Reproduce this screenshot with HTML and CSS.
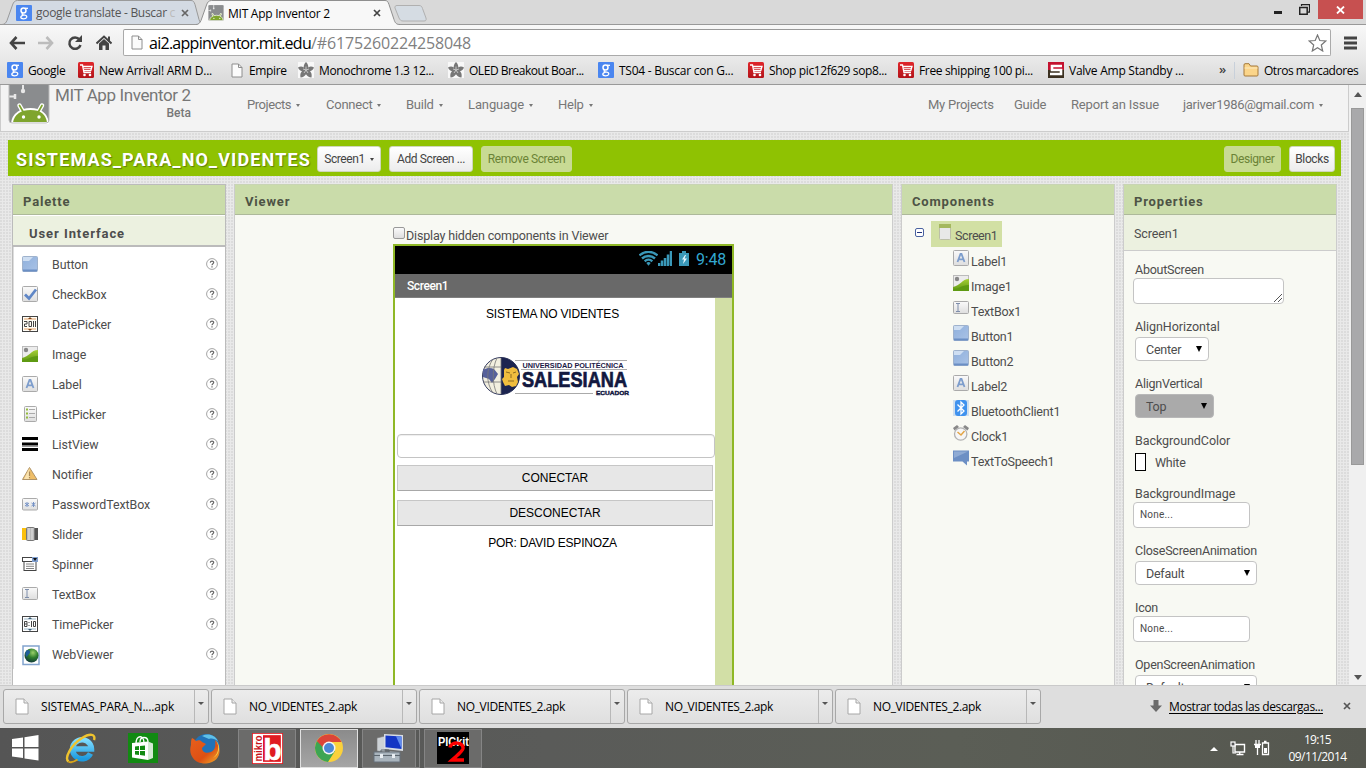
FILE: index.html
```html
<!DOCTYPE html>
<html lang="es">
<head>
<meta charset="utf-8">
<title>MIT App Inventor 2</title>
<link rel="stylesheet" href="styles.css">
</head>
<body>
<svg class="defs" width="0" height="0">
  <defs>
    <linearGradient id="blueG" x1="0" y1="0" x2="1" y2="1"><stop offset="0" stop-color="#8fb0dc"/><stop offset="1" stop-color="#a9c2e6"/></linearGradient>
    <linearGradient id="greyG" x1="0" y1="0" x2="0" y2="1"><stop offset="0" stop-color="#fafafa"/><stop offset="1" stop-color="#dedede"/></linearGradient>
    <linearGradient id="redG" x1="0" y1="0" x2="0" y2="1"><stop offset="0" stop-color="#e0262b"/><stop offset="1" stop-color="#b3141a"/></linearGradient>
    <linearGradient id="ieG" x1="0" y1="0" x2="0" y2="1"><stop offset="0" stop-color="#7fdcff"/><stop offset="1" stop-color="#1d9be0"/></linearGradient>
    <linearGradient id="ffG" x1="0" y1="0" x2="1" y2="1"><stop offset="0" stop-color="#e8601c"/><stop offset=".6" stop-color="#dd5014"/><stop offset="1" stop-color="#f5b32a"/></linearGradient>
    <linearGradient id="grass" x1="0" y1="0" x2="0" y2="1"><stop offset="0" stop-color="#a4cf35"/><stop offset="1" stop-color="#5c9512"/></linearGradient>
    <radialGradient id="earth" cx=".6" cy=".3" r=".8"><stop offset="0" stop-color="#9ad06a"/><stop offset=".45" stop-color="#2e7d2c"/><stop offset="1" stop-color="#0b2a3e"/></radialGradient>
  </defs>
</svg>
<svg class="symbols">
  <symbol id="g" viewBox="0 0 16 16"><rect width="16" height="16" rx="1" fill="#4a86f0"/><g fill="none" stroke="#fff"><circle cx="7.500" cy="5.500" r="2.500" stroke-width="1.500"/><path d="M9 3.300h3" stroke-width="1.300"/><path d="M7 8c-1.500.7-1.300 1.600.6 1.900 2.600.4 3.600 1 3 2.600-.7 1.700-5.600 1.800-5.800-.1-.1-1 .9-1.900 2.700-2.300" stroke-width="1.300"/></g></symbol>
  <symbol id="cart" viewBox="0 0 16 16"><rect width="16" height="16" rx="1.500" fill="url(#redG)"/><path d="M2 3h2.500l1.500 7.500h7M4.800 4.500H14L12.8 8.500H5.500" fill="none" stroke="#fff" stroke-width="1.300"/><path d="M6 6.500h7" stroke="#fff" stroke-width=".8"/><circle cx="6.500" cy="13" r="1.300" fill="#fff"/><circle cx="12" cy="13" r="1.300" fill="#fff"/></symbol>
  <symbol id="page" viewBox="0 0 12 15"><path d="M1 1h6.500l3.500 3.500V14H1z" fill="#fbfbfb" stroke="#8e8e8e"/><path d="M7.500 1v3.500H11" fill="none" stroke="#8e8e8e"/></symbol>
  <symbol id="ada" viewBox="0 0 16 16"><rect width="16" height="16" fill="#f8f8f8"/><path d="M8 0c1.800 1.800 2.400 3.500 2.300 5.400C12.200 4.300 14 4.400 16 5.500c-.9 2.100-2.200 3.200-4 3.700 1.600 1.500 2 3.400 1.500 6.300-2.600-.3-4.300-1.300-5.500-3.300-1.200 2-2.900 3-5.500 3.300C2 12.600 2.400 10.700 4 9.200 2.200 8.700.9 7.600 0 5.500c2-1.100 3.800-1.200 5.700-.1C5.600 3.500 6.200 1.800 8 0z" fill="#777"/><path d="M8 8V4.500M8 8l3-1M8 8l2 3M8 8l-2 3M8 8L5 7" stroke="#d5d5d5" stroke-width=".8"/></symbol>
  <symbol id="bot" viewBox="0 0 42 42"><rect x="1" y="0" width="40" height="41" rx="3" fill="#8a8c8e"/><path d="M15 0v8M0 14.500h7" stroke="#e8e8e8" stroke-width="2"/><circle cx="15" cy="9" r="2.200" fill="#e8e8e8"/><path d="M7 12v5" stroke="#e8e8e8" stroke-width="2.500"/><path d="M11.500 23.500l4 7M34 23.500l-4 7" fill="none" stroke="#fff" stroke-width="4.500" stroke-linecap="round"/><path d="M4 41C5 31.500 13 27 22.500 27S39 31.500 40 41z" fill="#7fa52e" stroke="#fff" stroke-width="1.800"/><path d="M11.500 23.500l4 7M34 23.500l-4 7" stroke="#7fa52e" stroke-width="1.700" stroke-linecap="round"/><circle cx="15.500" cy="35" r="1.700" fill="#fff"/><circle cx="31" cy="35" r="1.700" fill="#fff"/><rect x="1" y="0" width="40" height="41" rx="3" fill="none" stroke="#bbb"/></symbol>
  <symbol id="i-button" viewBox="0 0 16 16"><rect x=".5" y=".5" width="15" height="15" rx="1" fill="url(#blueG)" stroke="#9fb2cc"/><path d="M1 1h10L7 5H1z" fill="#dce8f6" opacity=".8"/><path d="M1 14.500h14" stroke="#6b8fc4" stroke-width="2"/></symbol>
  <symbol id="i-check" viewBox="0 0 16 16"><rect x=".5" y=".5" width="15" height="15" rx="1" fill="url(#greyG)" stroke="#aaa"/><path d="M3 8.500l4 4 7-9" fill="none" stroke="#5f86c6" stroke-width="2.800"/></symbol>
  <symbol id="i-date" viewBox="0 0 16 16"><rect x=".5" y=".5" width="15" height="15" fill="#fffdf6" stroke="#444"/><path d="M2 3h12M2 13h12" stroke="#e6a36a"/><path d="M6 3l2-2 2 2zM6 13l2 2 2-2z" fill="#7c4318"/><path d="M2 5.500h3V8H2.500v2.500H5M7 5.500h2.500v5H7zM11.500 5v6M13.500 5v6" fill="none" stroke="#444"/></symbol>
  <symbol id="i-image" viewBox="0 0 16 16"><rect x=".5" y=".5" width="15" height="15" fill="#ececec" stroke="#bbb"/><circle cx="4" cy="4" r="2.200" fill="#888"/><path d="M0 12C7 11 9 4 16 4v12H0z" fill="url(#grass)"/><path d="M0 14c7 0 8-4 16-4v6H0z" fill="#5e9a12"/></symbol>
  <symbol id="i-label" viewBox="0 0 16 16"><rect x=".5" y=".5" width="15" height="15" rx="1" fill="url(#greyG)" stroke="#aaa"/><path d="M4.500 12L7.500 4h1l3 8M5.500 9.300h5" fill="none" stroke="#7d9dcc" stroke-width="1.800"/></symbol>
  <symbol id="i-listp" viewBox="0 0 16 16"><rect x="2.500" y=".5" width="12" height="15" rx="1" fill="url(#greyG)" stroke="#aaa"/><path d="M7 3.500h6M7 7.500h6M7 11.500h6" stroke="#aaa"/><path d="M4 3.500h2M4 7.500h2M4 11.500h2" stroke="#93bb3d" stroke-width="2"/></symbol>
  <symbol id="i-listv" viewBox="0 0 16 16"><path d="M0 2.500h16M0 8h16M0 13.500h16" stroke="#000" stroke-width="3"/><path d="M0 10.500h16" stroke="#999"/></symbol>
  <symbol id="i-notif" viewBox="0 0 16 16"><path d="M7.500 1.500L15 13.500H.5z" fill="#efbe68" stroke="#b09468"/><path d="M7.500 2L2 13h5.500z" fill="#fae3af"/><path d="M7.500 5.500v4.500M7.500 11v1.300" stroke="#a98a58" stroke-width="1.200"/></symbol>
  <symbol id="i-pass" viewBox="0 0 16 16"><rect x=".5" y="2.500" width="15" height="11.500" rx="1" fill="url(#greyG)" stroke="#aaa"/><path d="M5 6v5M3 7l4 3M7 7l-4 3M11.500 6v5M9.500 7l4 3M13.500 7l-4 3" stroke="#7592c6"/></symbol>
  <symbol id="i-slider" viewBox="0 0 16 16"><rect y="2" width="5" height="12" fill="#fbc00d"/><rect x="12" y="2" width="4" height="12" fill="#555"/><rect x="4.500" y="1.500" width="8" height="13" rx="1" fill="#bbb" stroke="#777"/><path d="M7 2v12M10 2v12" stroke="#e4e4e4"/></symbol>
  <symbol id="i-spin" viewBox="0 0 16 16"><rect x="2" y="5" width="12" height="9.500" fill="#fff" stroke="#444"/><rect x=".5" y="1.500" width="15" height="4" fill="#fff" stroke="#444"/><rect x="10" y="1" width="6" height="5" fill="#7f9fd0"/><path d="M11 2h4l-2 3z" fill="#111"/><path d="M4 8h8M4 10.300h8M4 12.500h8" stroke="#777" stroke-width=".9"/></symbol>
  <symbol id="i-text" viewBox="0 0 16 16"><rect x=".5" y="1.500" width="15" height="12" rx="1" fill="url(#greyG)" stroke="#aaa"/><path d="M3 3.500h4M5 4v7M3 11.500h4" stroke="#7e8eab" fill="none"/></symbol>
  <symbol id="i-time" viewBox="0 0 16 16"><rect x=".5" y=".5" width="15" height="15" fill="#fff" stroke="#444"/><path d="M2 3h12M2 13h12" stroke="#9bb8cb"/><path d="M6 3l2-2 2 2zM6 13l2 2 2-2z" fill="#3d5d74"/><path d="M2.500 5.500H5v5H2.500zM2.500 8H5M7 6v1M7 9v1M9.500 5v6M11.500 5.500h2v5h-2z" fill="none" stroke="#444"/></symbol>
  <symbol id="i-web" viewBox="0 0 18 21"><rect x="1" y="1" width="16" height="18.500" fill="#fff" stroke="#83a4ce" stroke-width="1.500"/><circle cx="9.500" cy="10.500" r="7" fill="url(#earth)"/><path d="M4 6c2-2 4-1 4 1s-2 2-3 5c-2-1-2-4-1-6z" fill="#1e5d9a"/></symbol>
  <symbol id="q" viewBox="0 0 12 12"><circle cx="6" cy="6" r="5.400" fill="#fff" stroke="#a4a4a4"/><path d="M4.300 4.600c.1-2 3.500-2 3.400 0C7.700 5.800 6 5.700 6 7.200M6 8.200v1.300" fill="none" stroke="#666" stroke-width="1.200"/></symbol>
  <symbol id="i-bt" viewBox="0 0 16 16"><rect width="16" height="16" fill="#cfdfee"/><rect x="2" width="12" height="16" rx="3" fill="#3f92ee"/><path d="M4.500 4.500l6.500 6.500-3 3V2l3 3-6.500 6.500" fill="none" stroke="#fff" stroke-width="1.300"/></symbol>
  <symbol id="i-clock" viewBox="0 0 16 16"><path d="M1.500 5.500L0 3l4-3 2 2zM14.500 5.500L16 3l-4-3-2 2z" fill="#888"/><circle cx="7.700" cy="9" r="6.200" fill="#f6f6f6" stroke="#b2b2b2" stroke-width="1.300"/><path d="M4.500 7L8 10l3.500-4" fill="none" stroke="#e3a546" stroke-width="1.500"/></symbol>
  <symbol id="i-tts" viewBox="0 0 16 16"><path d="M0 .5h16V11.500h-2V15.500L9.500 11.500H0z" fill="#6c8fc4"/><path d="M1 1.500h14L1 8z" fill="#8fabd4"/></symbol>
  <symbol id="dl" viewBox="0 0 14 17"><path d="M1 1h8l4 4v11H1z" fill="#fff" stroke="#a6a6a6"/><path d="M9 1v4h4" fill="#eee" stroke="#a6a6a6"/></symbol>
</svg>

<div class="tabs">
  <div class="tab tab-back">
    <svg class="shape" width="202" height="25" viewBox="0 0 202 25"><path d="M0 24.500c3 0 4-2 5-4L10.500 5c1-3 2.500-4.500 5-4.500H189c2 0 3 1 4 4l4 15c1 3 2 5 5 5z" fill="#d3dae3" stroke="#9a9a9a"/></svg>
    <svg class="fav" width="16" height="16"><use href="#g"/></svg><span class="tname dim">google translate - Buscar <i>c</i></span>
    <svg class="x" width="8" height="8"><path d="M1 1l6 6M7 1L1 7" stroke="#666" stroke-width="1.700"/></svg>
  </div>
  <div class="tab tab-front">
    <svg class="shape" width="204" height="26" viewBox="0 0 204 26"><path d="M0 24.500c3 0 4-2 5-4L10.500 5c1-3 2.500-4.500 5-4.500H189c2 0 3 1 4 4l5 15c1 3 2 5 6 5V26H0z" fill="#f8f8f8"/><path d="M0 24.500c3 0 4-2 5-4L10.500 5c1-3 2.500-4.500 5-4.500H189c2 0 3 1 4 4l5 15c1 3 2 5 6 5" fill="none" stroke="#8f8f8f"/></svg>
    <svg class="fav" width="16" height="16"><use href="#bot"/></svg><span class="tname">MIT App Inventor 2</span>
    <svg class="x" width="8" height="8"><path d="M1 1l6 6M7 1L1 7" stroke="#444" stroke-width="1.700"/></svg>
  </div>
  <svg class="newtab" width="33" height="17"><path d="M3 .5h22c2 0 3 1 3.500 3L32 13c.5 2 0 3-2 3H9c-2 0-3-1-4-3L1 3C.500 1.500 1.500.500 3 .500z" fill="#d5dce3" stroke="#b0b0b0"/></svg>
  <div class="winbtns">
    <svg width="9" height="3"><rect y="0" width="8" height="3" fill="#222"/></svg>
    <svg class="restore" width="11" height="11"><path d="M2.500 2V.7h8v7.500H9" fill="none" stroke="#222" stroke-width="1.200"/><path d="M.7 3.500h7.500v6.800H.7z" fill="none" stroke="#222" stroke-width="1.500"/></svg>
    <div class="close"><svg width="9" height="8"><path d="M1 .5l7 7M8 .5l-7 7" stroke="#fff" stroke-width="1.800"/></svg></div>
  </div>
</div>

<div class="toolbar">
  <svg width="16" height="14"><path d="M7.500 1L2 7l5.500 6M2 7h14" fill="none" stroke="#444" stroke-width="2.600"/></svg>
  <svg width="16" height="14"><path d="M8.500 1L14 7l-5.500 6M14 7H0" fill="none" stroke="#bcbcbc" stroke-width="2.600"/></svg>
  <svg width="16" height="16"><path d="M12.500 4.500A5.700 5.700 0 1 0 13.500 10" fill="none" stroke="#444" stroke-width="2.500"/><path d="M15 0v7H8z" fill="#444"/></svg>
  <svg width="16" height="16"><path d="M.5 8.500L8 1.500l7.500 7" fill="none" stroke="#444" stroke-width="2"/><path d="M12 1.500h2v5h-2zM3 8.500l5-4.500 5 4.500V15H9.500v-4.500h-3V15H3z" fill="#444"/></svg>
  <div class="url"><svg width="12" height="15"><use href="#page"/></svg><span class="host">ai2.appinventor.mit.edu</span><span class="path">/#6175260224258048</span>
    <svg class="star" width="19" height="18" viewBox="0 0 19 18"><path d="M9.500 1l2.300 5.500 6 .5-4.500 4 1.400 6-5.200-3.200L4.300 17l1.400-6-4.500-4 6-.5z" fill="#fff" stroke="#777" stroke-width="1.200"/></svg></div>
  <svg class="burger" width="13" height="14"><path d="M0 2h13M0 7h13M0 12h13" stroke="#444" stroke-width="3"/></svg>
</div>

<div class="marks">
  <a class="w71"><svg width="16" height="16"><use href="#g"/></svg>Google</a>
  <a class="w153"><svg width="16" height="16"><use href="#cart"/></svg>New Arrival! ARM D...</a>
  <a class="w67 pg"><svg width="12" height="15"><use href="#page"/></svg>Empire</a>
  <a class="w150"><svg width="16" height="16"><use href="#ada"/></svg>Monochrome 1.3 12...</a>
  <a class="w150 t4"><svg width="16" height="16"><use href="#ada"/></svg>OLED Breakout Boar...</a>
  <a class="w150 t2"><svg width="16" height="16"><use href="#g"/></svg>TS04 - Buscar con G...</a>
  <a class="w150"><svg width="16" height="16"><use href="#cart"/></svg>Shop pic12f629 sop8...</a>
  <a class="w150"><svg width="16" height="16"><use href="#cart"/></svg>Free shipping 100 pi...</a>
  <a class="w171 t2"><svg width="16" height="16"><rect width="16" height="8" fill="#c4122f"/><rect y="8" width="16" height="8" fill="#3b3020"/><path d="M14 4H4v4h9v4H2" fill="none" stroke="#fff" stroke-width="2.600"/></svg>Valve Amp Standby ...</a>
  <span class="more">»</span>
  <a class="others t4"><svg width="16" height="14"><path d="M1 3V2c0-.8.400-1.300 1-1.300h4L7.500 3H14c.6 0 1 .4 1 1v8c0 .6-.4 1-1 1H2c-.6 0-1-.4-1-1z" fill="#fbd58a" stroke="#a5793a"/><path d="M1.500 5h13" stroke="#fdeabf"/></svg>Otros marcadores</a>
</div>

<div class="web">
  <div class="page">
    <header class="head">
      <svg class="logo" width="42" height="42"><use href="#bot"/></svg>
      <div class="brand"><div class="b1">MIT App Inventor 2</div><div class="b2">Beta</div></div>
      <nav class="nav">
        <span class="n79">Projects<b></b></span><span class="n80">Connect<b></b></span><span class="n62">Build<b></b></span><span class="n90">Language<b></b></span><span>Help<b></b></span>
      </nav>
      <nav class="nav right">
        <span class="n86">My Projects</span><span class="n57">Guide</span><span class="n112">Report an Issue</span><span class="mail">jariver1986@gmail.com<b></b></span>
      </nav>
    </header>

    <div class="green">
      <h1>SISTEMAS_PARA_NO_VIDENTES</h1>
      <div class="btn k64">Screen1<b></b></div><div class="btn k84">Add Screen ...</div><div class="btn off k91">Remove Screen</div>
      <div class="grow"></div>
      <div class="btn off k57">Designer</div><div class="btn k46">Blocks</div>
    </div>

    <main class="cols">
      <section class="panel palette">
        <h2>Palette</h2>
        <h3>User Interface</h3>
        <ul>
          <li><svg width="16" height="16"><use href="#i-button"/></svg><span>Button</span><svg class="q" width="12" height="12"><use href="#q"/></svg></li>
          <li><svg width="16" height="16"><use href="#i-check"/></svg><span>CheckBox</span><svg class="q" width="12" height="12"><use href="#q"/></svg></li>
          <li><svg width="16" height="16"><use href="#i-date"/></svg><span>DatePicker</span><svg class="q" width="12" height="12"><use href="#q"/></svg></li>
          <li><svg width="16" height="16"><use href="#i-image"/></svg><span>Image</span><svg class="q" width="12" height="12"><use href="#q"/></svg></li>
          <li><svg width="16" height="16"><use href="#i-label"/></svg><span>Label</span><svg class="q" width="12" height="12"><use href="#q"/></svg></li>
          <li><svg width="16" height="16"><use href="#i-listp"/></svg><span>ListPicker</span><svg class="q" width="12" height="12"><use href="#q"/></svg></li>
          <li><svg width="16" height="16"><use href="#i-listv"/></svg><span>ListView</span><svg class="q" width="12" height="12"><use href="#q"/></svg></li>
          <li><svg width="16" height="16"><use href="#i-notif"/></svg><span>Notifier</span><svg class="q" width="12" height="12"><use href="#q"/></svg></li>
          <li><svg width="16" height="16"><use href="#i-pass"/></svg><span>PasswordTextBox</span><svg class="q" width="12" height="12"><use href="#q"/></svg></li>
          <li><svg width="16" height="16"><use href="#i-slider"/></svg><span>Slider</span><svg class="q" width="12" height="12"><use href="#q"/></svg></li>
          <li><svg width="16" height="16"><use href="#i-spin"/></svg><span>Spinner</span><svg class="q" width="12" height="12"><use href="#q"/></svg></li>
          <li><svg width="16" height="16"><use href="#i-text"/></svg><span>TextBox</span><svg class="q" width="12" height="12"><use href="#q"/></svg></li>
          <li><svg width="16" height="16"><use href="#i-time"/></svg><span>TimePicker</span><svg class="q" width="12" height="12"><use href="#q"/></svg></li>
          <li class="webv"><svg width="18" height="21"><use href="#i-web"/></svg><span>WebViewer</span><svg class="q" width="12" height="12"><use href="#q"/></svg></li>
        </ul>
      </section>

      <section class="panel viewer">
        <h2>Viewer</h2>
        <div class="vbody">
          <div class="hidden"><span class="cb"></span>Display hidden components in Viewer</div>
          <div class="phone">
            <div class="status">
              <svg width="19" height="15" viewBox="0 0 19 15"><path d="M.5 4.500a13 13 0 0 1 18 0M3 7.500a9.500 9.500 0 0 1 13 0M5.700 10.300a5.500 5.500 0 0 1 7.600 0" fill="none" stroke="#3a98b8" stroke-width="2.400"/><path d="M7.300 12L9.500 14.800 11.700 12a3.500 3.500 0 0 0-4.400 0z" fill="#3a98b8"/></svg><svg width="14" height="15"><path d="M1 15v-3M4 15v-5.500M7 15V7M10 15V3.500M13 15V0" stroke="#3a98b8" stroke-width="2.500"/></svg><svg class="bat" width="10" height="15"><path d="M0 2h3V0h4v2h3v13H0z" fill="#3a98b8"/><path d="M6 4L3 8.500h2L4 13l4-5.500H5.500L7 4z" fill="#e8f8ff"/></svg><span>9:48</span>
            </div>
            <div class="ptitle">Screen1</div>
            <div class="pbody">
              <div class="canvas">
                <div class="lbl">SISTEMA NO VIDENTES</div>
                <svg class="ups" width="150" height="42" viewBox="0 0 150 42">
                  <path d="M34 5.500h112M40 14.500h106M34 38.500h78" stroke="#aaa"/>
                  <circle cx="20" cy="21" r="18.500" fill="#f2efe0" stroke="#333a5e"/>
                  <path d="M20 2.500a18.500 18.500 0 0 1 0 37z" fill="#1c2450"/>
                  <path d="M2 15c5-3 8-2 11-1l4 5-3 5-3 4-3-4-6-2z" fill="#56609a"/>
                  <path d="M20 3v36M12 4C5 14 5 28 12 38M3 12h17M2 27h18M16 3c-5 10-5 26 0 36" fill="none" stroke="#777" stroke-width=".8"/>
                  <path d="M23 15l1-2 3 1 5-2 4 2 2 5-2 3 1 5-2 4-4 1-3-2-4 1-2-4-1-3 2-2z" fill="#f0bd3e"/>
                  <path d="M25 17l4 1M32 18l3-1M27 26l6 0M30 19v4" stroke="#8d6b20" stroke-width="1"/>
                  <text x="41.500" y="12.700" font-family="Liberation Sans, sans-serif" font-weight="700" font-size="7.300" textLength="101" fill="#1b2046">UNIVERSIDAD POLITÉCNICA</text>
                  <text x="41" y="32" font-family="Liberation Sans, sans-serif" font-weight="700" font-size="21.500" textLength="105" lengthAdjust="spacingAndGlyphs" fill="#12183f" stroke="#12183f" stroke-width=".7">SALESIANA</text>
                  <text x="115" y="39.700" font-family="Liberation Sans, sans-serif" font-weight="700" font-size="6" textLength="33" lengthAdjust="spacingAndGlyphs" fill="#12183f" stroke="#12183f" stroke-width=".4">ECUADOR</text>
                </svg>
                <div class="tb"></div>
                <div class="pbtn">CONECTAR</div>
                <div class="pbtn">DESCONECTAR</div>
                <div class="lbl l2">POR: DAVID ESPINOZA</div>
              </div>
            </div>
          </div>
        </div>
      </section>

      <section class="panel comps">
        <h2>Components</h2>
        <div class="root"><svg width="9" height="9"><rect x=".5" y=".5" width="8" height="8" rx="1.500" fill="#fff" stroke="#4a62a0"/><path d="M2 4.500h5" stroke="#23357c"/></svg><div class="chip"><svg width="12" height="16"><rect x=".5" y=".5" width="11" height="15" rx="1" fill="#e8e8e8" stroke="#bcbfa8"/><rect x="0" y="0" width="12" height="4" fill="#a4b85e"/></svg>Screen1</div></div>
        <ul>
          <li><svg width="16" height="16"><use href="#i-label"/></svg>Label1</li>
          <li><svg width="16" height="16"><use href="#i-image"/></svg>Image1</li>
          <li><svg width="16" height="16"><use href="#i-text"/></svg>TextBox1</li>
          <li><svg width="16" height="16"><use href="#i-button"/></svg>Button1</li>
          <li><svg width="16" height="16"><use href="#i-button"/></svg>Button2</li>
          <li><svg width="16" height="16"><use href="#i-label"/></svg>Label2</li>
          <li><svg width="16" height="16"><use href="#i-bt"/></svg>BluetoothClient1</li>
          <li><svg width="16" height="16"><use href="#i-clock"/></svg>Clock1</li>
          <li><svg width="16" height="16"><use href="#i-tts"/></svg>TextToSpeech1</li>
        </ul>
      </section>

      <section class="panel props">
        <h2>Properties</h2>
        <div class="sub">Screen1</div>
        <div class="plist">
          <div><label>AboutScreen</label><div class="in ta"><svg width="8" height="8"><path d="M0 8L8 0M4 8l4-4" stroke="#555"/></svg></div></div>
          <div><label class="ah">AlignHorizontal</label><div class="sel s74">Center<em></em></div></div>
          <div><label>AlignVertical</label><div class="sel s79 dis">Top<em></em></div></div>
          <div><label class="ah">BackgroundColor</label><div class="color"><i></i>White</div></div>
          <div><label class="ah">BackgroundImage</label><div class="in">None...</div></div>
          <div><label>CloseScreenAnimation</label><div class="sel s122">Default<em></em></div></div>
          <div><label>Icon</label><div class="in">None...</div></div>
          <div><label>OpenScreenAnimation</label><div class="sel s122">Default<em></em></div></div>
        </div>
      </section>
    </main>
  </div>
  <div class="scroll"><i class="up"></i><div class="thumb"></div><i class="down"></i></div>
</div>

<div class="downloads">
  <div class="dl"><svg width="14" height="17"><use href="#dl"/></svg><span class="long">SISTEMAS_PARA_N....apk</span><b><i></i></b></div>
  <div class="dl"><svg width="14" height="17"><use href="#dl"/></svg><span>NO_VIDENTES_2.apk</span><b><i></i></b></div>
  <div class="dl"><svg width="14" height="17"><use href="#dl"/></svg><span>NO_VIDENTES_2.apk</span><b><i></i></b></div>
  <div class="dl"><svg width="14" height="17"><use href="#dl"/></svg><span>NO_VIDENTES_2.apk</span><b><i></i></b></div>
  <div class="dl"><svg width="14" height="17"><use href="#dl"/></svg><span>NO_VIDENTES_2.apk</span><b><i></i></b></div>
  <svg class="arr" width="12" height="12"><path d="M3.500 0h5v5.500H12L6 12 0 5.500h3.500z" fill="#6a6a6a"/></svg>
  <span class="all">Mostrar todas las descargas...</span>
  <svg class="dx" width="8" height="8"><path d="M1 1l6 6M7 1L1 7" stroke="#555" stroke-width="1.700"/></svg>
</div>

<div class="task">
  <svg class="start" width="27" height="26"><path d="M0 4l11-1.600V12H0zM12.500 2.200L26.500 0v12h-14zM0 13.500h11V23L0 21.500zM12.500 13.500h14v12l-14-2z" fill="#fff"/></svg>
  <svg class="ie" width="32" height="32" viewBox="0 0 32 32"><path d="M25.500 21.500a9.500 9.500 0 1 1 1-4.500H10" fill="none" stroke="url(#ieG)" stroke-width="5.500"/><path d="M3.500 29.500C-1 26 6 13 17 6 25 1 31 2 29 8" fill="none" stroke="#efc32e" stroke-width="2.400"/><path d="M3.500 29.500c2 1.500 6 0 9-2" fill="none" stroke="#d9a51a" stroke-width="2"/></svg>
  <svg class="store" width="30" height="30"><rect width="30" height="30" fill="#128a12"/><path d="M4 10l16-1.500V27L4 24.500z" fill="#fff"/><path d="M20 8.500l5 2V25l-5 2z" fill="#d5ead5"/><path d="M8 11c0-9 8-10 8-1M12 9c0-6 8-6 8 0" fill="none" stroke="#fff" stroke-width="1.300"/><path d="M7 13.500l4-.4v4H7zM12 13l5-.5V17h-5zM7 18h4v4l-4-.5zM12 18h5v4.700l-5-.6z" fill="#128a12"/></svg>
  <svg class="fox" width="31" height="31" viewBox="0 0 31 31"><circle cx="16.500" cy="14.500" r="13.500" fill="#2272b8"/><path d="M12 3c6-3 13-1 16 5-3-2-6-3-9-2z" fill="#5fc0e8"/><path d="M2 5c2 1 3 2 4 3 2-1 5-1 6 1l4 2-4 4c0 4 4 6 9 4 4-2 5-6 4-12 8 8 6 22-9 23.500C4 31-2 21 1 12c0-3 0-5 1-7z" fill="url(#ffG)"/><path d="M25 6c5 6 4 15-2 19 6-2 9-12 2-19z" fill="#fbd048"/></svg>
  <div class="tk b1x"><svg width="31" height="31"><rect width="31" height="31" fill="#e01b22"/><rect x="1.500" y="1.500" width="28" height="28" fill="none" stroke="#fff" stroke-width="1.300"/><rect x="2" y="2" width="9" height="27" fill="#fff"/><text x="0" y="0" transform="translate(9.800 28.500) rotate(-90)" font-family="Liberation Sans, sans-serif" font-weight="700" font-size="10" textLength="26" lengthAdjust="spacingAndGlyphs" fill="#c9141b">mikro</text><text x="20.500" y="26.500" text-anchor="middle" font-family="Liberation Sans, sans-serif" font-weight="700" font-size="30" fill="#fff" stroke="#fff" stroke-width=".6">b</text></svg></div>
  <div class="tk act"><svg width="30" height="30" viewBox="0 0 30 30"><circle cx="15" cy="15" r="14" fill="#fbd13b"/><path d="M15 15L2.900 8A14 14 0 0 0 14 29l7-11z" fill="#3da553"/><path d="M2.900 8A14 14 0 0 1 27.500 9H15l-6 5.500z" fill="#dc4437"/><circle cx="15" cy="15" r="6.500" fill="#f4f4f4"/><circle cx="15" cy="15" r="5" fill="#4b87d6"/></svg></div>
  <div class="tk dev"><svg width="34" height="32" viewBox="0 0 34 32"><path d="M5 6l8-2v16l-8-1z" fill="#cdd2d6" stroke="#777" stroke-width=".6"/><path d="M12 2l19 1v16l-19-2z" fill="#d8dde4"/><path d="M13.500 3.500l16 1v12.500l-16-1.700z" fill="#1436c4"/><path d="M24 4.300l5.500.2v12.300z" fill="#5f8bef"/><path d="M17 19l9 1 2 4-9-1z" fill="#bbb"/><path d="M2 20h26v10H2z" fill="#a9b4bd" stroke="#66707a"/><path d="M2 23.500h26M9 20v-2h8v2" fill="none" stroke="#5c666f"/><path d="M8 22h3v4H8zM20 22h3v4h-3z" fill="#e9eef2"/></svg></div>
  <div class="stack"></div>
  <div class="tk pk"><svg width="32" height="32"><rect width="32" height="32" fill="#000"/><text x="1" y="13.500" font-family="Liberation Sans, sans-serif" font-weight="700" font-size="12.500" textLength="31" lengthAdjust="spacingAndGlyphs" fill="#fff">PICkit</text><path d="M13 15.500c1-6 14-6 13 1-.5 3-5 6-11 11.500h12" fill="none" stroke="#f00" stroke-width="3.500"/></svg></div>
  <div class="grow"></div>
  <i class="tri"></i>
  <svg class="net" width="17" height="15"><path d="M5 3.500h9.500v7.500H5zM9.700 11v3M6.500 13.500h7" fill="none" stroke="#fff" stroke-width="1.400"/><rect x="1" y="1" width="4" height="4" fill="#555" stroke="#fff" stroke-width="1.200"/><path d="M3 5v7h3" fill="none" stroke="#fff" stroke-width="1.200"/></svg>
  <svg class="pow" width="17" height="16"><path d="M2 0v4M5 0v4M0 4.500h7M3.500 5v10" stroke="#fff" stroke-width="1.300"/><path d="M1 5h5v3H1z" fill="#fff"/><path d="M8.500 3h6v11.500h-6zM10 1.500h2.500" fill="none" stroke="#fff" stroke-width="1.300"/><rect x="10" y="8" width="3" height="5" fill="#fff"/></svg>
  <div class="clock"><div class="tm">19:15</div><div class="dt">09/11/2014</div></div>
</div>
</body>
</html>
```
FILE: styles.css
```css
*{box-sizing:border-box}
body{margin:0;width:1366px;height:768px;overflow:hidden;display:flex;flex-direction:column;font:12px "Open Sans","Noto Sans",sans-serif;color:#000;background:#dedede}
svg{display:block;flex:none}
.defs{position:absolute}
.symbols{display:none}
ul{list-style:none;margin:0;padding:0}
h1,h2,h3{margin:0}
.grow{flex:1}

/* browser tabs */
.tabs{height:25px;flex:none;display:flex;background:#d9d9d9;border-bottom:1px solid #999;padding-left:2px}
.tab{position:relative;display:flex;align-items:center;height:25px;flex:none}
.tab .shape{position:absolute;left:0;top:0}
.tab .fav,.tab .tname,.tab .x{position:relative}
.tab-back{width:194px;padding-left:14px}
.tab-front{width:198px;padding-left:12px;height:26px;z-index:1}
.tab .fav{margin-right:4px}
.tname{width:145px;letter-spacing:-.3px;white-space:nowrap;line-height:25px;height:25px}
.tab-front .tname{letter-spacing:-.25px}
.tname.dim{color:#555}
.tname i{font-style:normal;color:#bbb}
.newtab{margin-top:5px}
.winbtns{margin-left:auto;display:flex;margin-right:3px}
.winbtns>svg{margin-top:11px;margin-right:16px}
.winbtns .restore{margin-top:4px;margin-right:8px}
.close{width:45px;height:19px;background:#c75050;display:flex;align-items:center;justify-content:center}

/* toolbar */
.toolbar{height:33px;flex:none;display:flex;align-items:center;padding:2px 9px 0 9px;background:linear-gradient(#f8f8f8,#e9e9e9)}
.toolbar>svg{margin-right:13px}
.toolbar .url{flex:1;margin-left:-2px;height:27px;border:1px solid #aaa;border-top-color:#999;border-radius:2px;background:#fff;display:flex;align-items:center;padding-left:7px;font-size:16px;white-space:nowrap}
.url svg{margin-right:6px}
.host{letter-spacing:-.73px}
.path{color:#808080;letter-spacing:-.14px}
.url .star{margin:0 3px 0 auto}
.toolbar .burger{margin:0 0 0 13px}

/* bookmarks */
.marks{height:27px;flex:none;display:flex;align-items:center;padding:0 0 2px 7px;background:linear-gradient(#e9e9e9,#d9d9d9);border-bottom:1px solid #999;letter-spacing:-.36px;white-space:nowrap}
.marks a{display:flex;align-items:center;flex:none;gap:5px}
.marks a:nth-child(2){letter-spacing:-.22px}
.marks .t4{letter-spacing:-.46px}
.marks .t2{letter-spacing:-.25px}
.marks .pg{gap:6px}
.w71{width:71px}.w153{width:153px}.w67{width:67px}.w150{width:150px}.w171{width:171px}
.more{width:16px;font-size:13px;font-weight:600;border-right:1px solid #c8d0da;color:#444;line-height:14px;padding-bottom:3px}
.others{margin-left:8px}

/* page area */
.web{height:600px;flex:none;display:flex;overflow:hidden}
.page{width:1349px;height:600px;overflow:hidden;font-family:Roboto,sans-serif;background-color:#e9e9e9;background-image:radial-gradient(circle at 1px 1px,#d8d8d8 .6px,transparent 1px);background-size:3px 3px}
.head{height:47px;background:#f3f3f3;border-bottom:1px solid #ccc;border-left:1px solid #ccc;border-right:1px solid #ccc;display:flex;color:#777}
.logo{margin:-3px 0 0 7px}
.brand{width:136px;margin-left:5px;white-space:nowrap}
.b1{font-size:17px;line-height:20px;letter-spacing:-.4px}
.b2{font-size:12px;font-weight:500;line-height:17px;text-align:right}
.nav{display:flex;margin-left:56px;font-size:13px;line-height:40px;height:40px;letter-spacing:-.25px;white-space:nowrap}
.nav.right{margin-left:auto;margin-right:25px}
.nav b{display:inline-block;border:2.500px solid transparent;border-top:3px solid #777;border-bottom:0;margin-left:5px;vertical-align:2px}
.n79{width:79px;letter-spacing:-.45px}.n80{width:80px}.n62{width:62px}.n90{width:90px;letter-spacing:-.12px}.n86{width:86px}.n57{width:57px}.n112{width:112px;letter-spacing:-.15px}
.mail{letter-spacing:-.3px}

.green{height:36px;margin:8px 8px 0;background:#8fc202;display:flex;align-items:center;padding:2px 6px 0 8px;gap:8px}
.green h1{width:293px;font-size:18px;font-weight:700;letter-spacing:1.14px;color:#fff;text-shadow:1px 1px 1px #5d8108;white-space:nowrap;line-height:38px;height:36px}
.btn{height:26px;border-radius:3px;background:linear-gradient(#fff,#ececec);border:1px solid #cfd6bd;font-size:12px;letter-spacing:-.4px;color:#444;display:flex;align-items:center;justify-content:center;white-space:nowrap;flex:none}
.btn b{border:2.500px solid transparent;border-top:3px solid #444;border-bottom:0;margin-left:5px}
.btn.off{background:#c8da94;border-color:#c8da94;color:#6b8336}
.k64{width:64px}.k84{width:84px}.k91{width:91px}.k57{width:57px}.k46{width:46px}

.cols{display:flex;padding:8px 0 0 12px;height:509px}
.panel{height:520px;flex:none;border:1px solid #ccc;border-top-color:#c8d4b4;background:#f8f9f3;color:#4d4d4d}
.panel h2{height:30px;background:#cadcaa;border-bottom:1px solid #adb99a;font-size:13px;line-height:33px;font-weight:700;letter-spacing:.83px;color:#4d5345;padding-left:10px}
.palette{width:214px;margin-right:8px;background:#fff;border-width:1px 1px 0 1px;border-color:#bbb}
.palette h3{height:32px;line-height:35px;background:#ecf1e0;border-bottom:2px solid #bbb;font-size:13px;letter-spacing:.93px;padding-left:16px;border-top:1px solid #fff;color:#4d4d4d}
.palette li{height:30px;display:flex;align-items:center;padding:0 7px 0 8px;font-size:12.400px;letter-spacing:-.06px;margin:0}
.palette ul{padding-top:2px;border-left:1px solid #ddd}
.palette li svg:first-child{margin-right:14px}
.palette li.webv svg:first-child{margin:2px 12px 0 0}
.palette li .q{margin-left:auto}
.palette li span{padding-top:1px}
.viewer{width:659px;margin-right:8px}
.vbody{padding-left:158px}
.hidden{height:29px;padding-top:11px;display:flex;font-size:12.500px;line-height:19px;letter-spacing:-.16px}
.cb{width:12px;height:12px;border:1px solid #999;border-radius:2px;background:linear-gradient(#fafafa,#dedede);margin:1px 1px 0 0}
.phone{width:341px;border:2px solid #8fb826;height:500px;background:#fff}
.status{height:28px;background:#000;display:flex;align-items:center;padding:0 6px 3px 0;justify-content:flex-end;color:#33a8d0;font-size:16px;letter-spacing:-.2px}
.status .bat{margin:0 7px}
.status span{padding-top:2px}
.ptitle{height:24px;background:#696969;color:#fff;font-size:12px;font-weight:500;line-height:25px;padding-left:12px;letter-spacing:-.4px;border-bottom:1px solid #808080}
.pbody{background:#d2dfa6;height:460px}
.canvas{width:320px;height:460px;background:#fff;font:12px/16px "Liberation Sans",sans-serif;color:#000;padding:8px 0 0 2px}
.lbl{text-align:center;letter-spacing:-.2px;margin-right:7px}
.ups{margin:33px 0 0 84px}
.tb{width:318px;height:24px;border:1px solid #c4c4c4;border-radius:4px;margin:37px 0 7px 0;box-shadow:inset 0 1px 1px #eee}
.pbtn{width:316px;height:26px;background:#e7e7e7;border:1px solid #c6c6c6;border-bottom-color:#a8a8a8;text-align:center;line-height:25px;margin-bottom:9px}
.comps{width:214px;margin-right:8px}
.root{display:flex;height:32px;padding-left:13px;font-size:12.500px;letter-spacing:-.4px}
.root>svg{margin:13px 7px 0 0}
.chip{margin-top:6px;height:26px;width:71px;background:#d2e0a4;display:flex;padding:2px 0 0 8px;line-height:26px;gap:4px}
.chip svg{margin-top:1px}
.comps ul{padding-left:51px}
.comps li{height:25px;display:flex;gap:2px;font-size:12.500px;letter-spacing:-.2px;line-height:30px}
.comps li svg{margin-top:3px}
.props{width:214px}
.sub{height:36px;background:#ecf1e0;border-bottom:1px solid #ccc;padding-left:10px;line-height:37px;font-size:12.500px;letter-spacing:-.1px}
.plist{display:grid;grid-template-rows:57px 57px 57px 53px 57px 57px 57px 50px;padding:10px 0 0 9px;font-size:12.500px;letter-spacing:-.24px}
.plist label{display:block;line-height:17px;padding-left:2px}
.plist .ah{letter-spacing:-.06px}
.in{width:117px;height:26px;border:1px solid #c4c4c4;border-radius:4px;background:#fff;font-size:10px;letter-spacing:.2px;line-height:23px;padding-left:6px}
.ta{width:151px;display:flex;align-items:flex-end;justify-content:flex-end;padding:0 1px 1px 0}
.sel{height:24px;border:1px solid #c4c4c4;border-radius:4px;background:#fff;margin:2px 0 0 2px;padding:1px 6px 0 10px;display:flex;align-items:center;justify-content:space-between}
.sel em{border:3.500px solid transparent;border-top:6px solid #000;border-bottom:0;margin-top:-1px}
.dis{background:#aaa;border-color:#b8b8b8}
.s74{width:74px}.s79{width:79px}.s122{width:122px}
.color{display:flex;align-items:center;margin:4px 0 0 2px;height:18px}
.color i{width:11px;height:18px;border:1.500px solid #000;background:#fff;margin-right:9px}
.scroll{width:17px;background:#f0f0f0;display:flex;flex-direction:column;align-items:center;padding:7px 0 5px}
.up{border:4px solid transparent;border-bottom:5px solid #555;border-top:0}
.down{border:4px solid transparent;border-top:5px solid #555;border-bottom:0;margin-top:auto}
.thumb{width:13px;height:357px;background:#a9a9ab;border:1px solid #999;margin-top:11px}

/* downloads */
.downloads{height:43px;flex:none;background:#dedede;border-top:1px solid #cacaca;display:flex;align-items:center;padding:0 0 2px 3px;gap:2px;white-space:nowrap}
.dl{width:206px;height:35px;border:1px solid #a8a8a8;border-radius:3px;background:linear-gradient(#ececec,#dfdfdf);display:flex;align-items:center;padding-left:11px;letter-spacing:-.35px;flex:none}
.dl svg{margin-right:12px}
.dl .long{letter-spacing:-.18px}
.dl b{margin-left:auto;width:14px;height:33px;border-left:1px solid #b8b8b8;padding:12px 0 0 3px}
.dl i{display:block;width:0;border:3px solid transparent;border-top:3.500px solid #555;border-bottom:0}
.arr{margin-left:107px}
.all{margin-left:5px;letter-spacing:-.4px;text-decoration:underline;text-underline-offset:2px}
.dx{margin-left:18px}

/* taskbar */
.task{height:40px;flex:none;display:flex;align-items:center;background:linear-gradient(90deg,#555 0,#5a5b59 40%,#5b5e56 70%,#55574f);color:#fff}
.start{margin-left:12px}
.ie{margin-left:26px}
.store{margin-left:31px}
.fox{margin-left:32px}
.tk{width:58px;height:39px;border:1px solid #858585;background:#6b6b6a;display:flex;align-items:center;justify-content:center;margin-right:4px;flex:none}
.b1x{margin-left:17px}
.act{background:linear-gradient(#8b8b8b,#a5a5a5);border-color:#e0e0e0}
.dev{width:54px;margin-right:0}
.stack{width:4px;height:39px;border:1px solid #858585;border-left:0;margin-right:4px}
.pk{padding-right:1px}
.tri{border:4.500px solid transparent;border-bottom:4.500px solid #fff;border-top:0;margin-right:12px;margin-bottom:-2px}
.net{margin-right:7px}
.pow{margin-right:17px}
.clock{width:59px;margin-right:19px;text-align:center;line-height:17px;white-space:nowrap}
.tm{letter-spacing:-.7px}
.dt{letter-spacing:-.57px}
```
